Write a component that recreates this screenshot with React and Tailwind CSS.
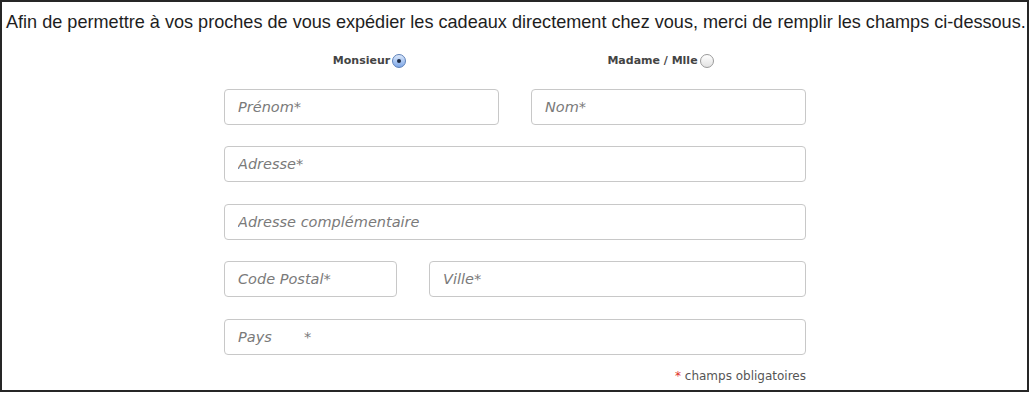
import { useState } from 'react'

const gothic = "font-['DejaVu_Sans',sans-serif]"

function Radio({ checked }) {
    return checked ? (
        <span className="inline-flex items-center justify-center w-[14px] h-[14px] rounded-full border border-[#5b7fb8] bg-gradient-to-b from-[#dbe8fb] to-[#7ea7e6]">
            <span className="w-[4px] h-[4px] rounded-full bg-[#1b2a44]"></span>
        </span>
    ) : (
        <span className="inline-block w-[14px] h-[14px] rounded-full border border-[#9a9a9a] bg-gradient-to-b from-[#ffffff] to-[#e2e2e2]"></span>
    )
}

function Field({ placeholder, className = '' }) {
    return (
        <input
            type="text"
            placeholder={placeholder}
            className={`h-[36px] px-[13px] border border-[#c8c8c8] rounded-[4px] bg-white text-[14.5px] text-[#555] outline-none placeholder:italic placeholder:text-[#7a7a7a] ${gothic} ${className}`}
        />
    )
}

export default function App() {
    const [civility, setCivility] = useState('mr')

    return (
        <div className="w-[1029px] h-[392px] border-2 border-[#262626] bg-white">
            <p className="pt-[9px] pl-[4px] text-[18.1px] leading-[23px] text-[#1e1e1e] font-['Liberation_Sans',Arial,sans-serif]">
                Afin de permettre à vos proches de vous expédier les cadeaux directement chez vous, merci de remplir les champs ci-dessous.
            </p>

            <div className="w-[582px] ml-[222px] mt-[19px]">
                {/* Civility */}
                <div className={`grid grid-cols-2 text-[11px] font-bold text-[#444] ${gothic}`}>
                    <button onClick={() => setCivility('mr')} className="flex items-center justify-center gap-[2px]">
                        Monsieur <Radio checked={civility === 'mr'} />
                    </button>
                    <button onClick={() => setCivility('mme')} className="flex items-center justify-center gap-[2px]">
                        Madame / Mlle <Radio checked={civility === 'mme'} />
                    </button>
                </div>

                <div className="flex flex-col gap-[21.5px] mt-[19px]">
                    <div className="flex gap-[32px]">
                        <Field placeholder="Prénom*" className="w-[276px]" />
                        <Field placeholder="Nom*" className="w-[276px]" />
                    </div>
                    <Field placeholder="Adresse*" className="w-full" />
                    <Field placeholder="Adresse complémentaire" className="w-full" />
                    <div className="flex gap-[32px]">
                        <Field placeholder="Code Postal*" className="w-[173px]" />
                        <Field placeholder="Ville*" className="flex-1" />
                    </div>
                    <Field placeholder={'Pays\u00a0\u00a0\u00a0\u00a0\u00a0\u00a0\u00a0*'} className="w-full" />
                </div>

                <p className={`mt-[12px] text-right text-[12px] text-[#555] ${gothic}`}>
                    <span className="text-[#e0302a]">*</span> champs obligatoires
                </p>
            </div>
        </div>
    )
}
